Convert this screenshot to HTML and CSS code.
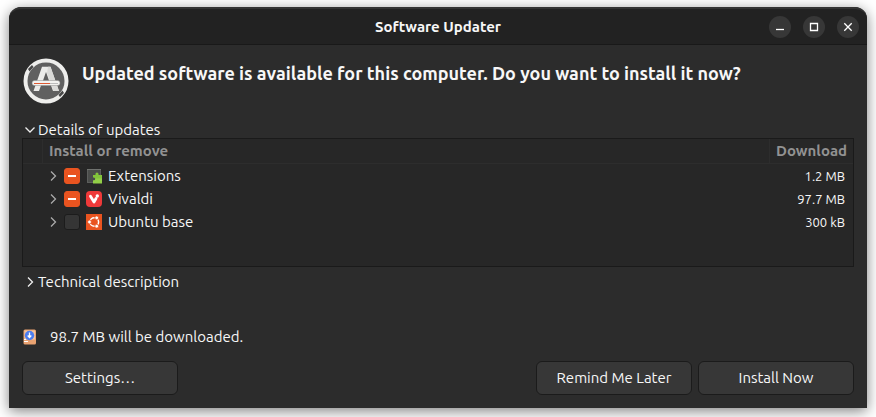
FILE: index.html
```html
<!DOCTYPE html>
<html lang="en">
<head>
<meta charset="utf-8">
<title>Software Updater</title>
<link rel="stylesheet" href="styles.css">
</head>
<body>
<main class="window">
  <header class="titlebar">
    <h1 class="title">Software Updater</h1>
    <div class="controls">
      <button class="control" type="button" aria-label="Minimize"><svg viewBox="0 0 22 22"><path d="M7 13.5h8"/></svg></button>
      <button class="control" type="button" aria-label="Maximize"><svg viewBox="0 0 22 22"><path d="M7.5 7.5h7v7h-7z"/></svg></button>
      <button class="control" type="button" aria-label="Close"><svg viewBox="0 0 22 22"><path d="M7.3 7.3l7.4 7.4M14.7 7.3l-7.4 7.4"/></svg></button>
    </div>
  </header>

  <div class="content">
    <section class="intro">
      <svg class="app-icon" viewBox="0 0 46 46" aria-hidden="true">
        <circle cx="23" cy="23" r="19" fill="#606060"/>
        <circle cx="23" cy="23" r="20.5" fill="none" stroke="#eeeeec" stroke-width="4"/>
        <path d="M5 11l4-4 1.500 2-4 4.500zM41 35l-4 4-1.500-2 4-4.500z" fill="#484848"/>
        <path d="M19 8.700h8.500L36 33h-6l-2.500-7h-9L16 33h-5.500zM23 14l-3.500 10h7z" fill="#ececea" fill-rule="evenodd"/>
        <path d="M25 8.700h2.500L36 33h-5.500l-6.500-18z" fill="#dadad8"/>
        <rect x="9" y="22.500" width="28" height="5" rx="2.500" fill="#f2f2f0" stroke="#8a8a8a" stroke-width=".5"/>
        <path d="M11 25.500h16" stroke="#dd5a34"/>
        <path d="M27 25.500h8" stroke="#bcbcbc"/>
      </svg>
      <h2 class="headline">Updated software is available for this computer. Do you want to install it now?</h2>
    </section>

    <button class="expander" type="button" aria-expanded="true">
      <svg class="arrow" viewBox="0 0 12 12"><path d="M1.500 3.500L6 8l4.500-4.500"/></svg>Details of updates
    </button>

    <div class="tree">
      <table class="updates">
        <thead>
          <tr><th class="gutter"></th><th class="name">Install or remove</th><th class="size">Download</th></tr>
        </thead>
        <tbody>
          <tr>
            <td></td>
            <td><div class="item">
              <button class="toggle" type="button" aria-label="Expand Extensions"><svg class="arrow" viewBox="0 0 12 12"><path d="M4 1.500L8.500 6 4 10.500"/></svg></button>
              <input class="check mixed" type="checkbox" id="extensions" checked>
              <svg class="item-icon" viewBox="0 0 16 16" aria-hidden="true">
                <path d="M1 1h14v14H1z" fill="#5c5e5c"/><path d="M2 2h12v12H2z" fill="#4a4c4a"/><path d="M1 1.500h14" stroke="#70726f"/>
                <path d="M7 7h2.500c-.8-3.500 3.800-3.500 3 0H16v8H7v-2.500c3 .8 3-3.800 0-3z" fill="#82c43a"/><path d="M7 12.500c2 .3 2.500-1 2.300-2H16v5H7z" fill="#93cf48"/>
              </svg>
              <label for="extensions">Extensions</label>
            </div></td>
            <td class="size">1.2 MB</td>
          </tr>
          <tr>
            <td></td>
            <td><div class="item">
              <button class="toggle" type="button" aria-label="Expand Vivaldi"><svg class="arrow" viewBox="0 0 12 12"><path d="M4 1.500L8.500 6 4 10.500"/></svg></button>
              <input class="check mixed" type="checkbox" id="vivaldi" checked>
              <svg class="item-icon" viewBox="0 0 16 16" aria-hidden="true">
                <rect width="16" height="16" rx="4" fill="#ef3939"/>
                <path d="M4.500 5.200L8 11l2-3.500" fill="none" stroke="#fff" stroke-width="2.800" stroke-linecap="round" stroke-linejoin="round"/><circle cx="11.300" cy="5" r="1.700" fill="#fff"/>
              </svg>
              <label for="vivaldi">Vivaldi</label>
            </div></td>
            <td class="size">97.7 MB</td>
          </tr>
          <tr>
            <td></td>
            <td><div class="item">
              <button class="toggle" type="button" aria-label="Expand Ubuntu base"><svg class="arrow" viewBox="0 0 12 12"><path d="M4 1.500L8.500 6 4 10.500"/></svg></button>
              <input class="check" type="checkbox" id="base">
              <svg class="item-icon" viewBox="0 0 16 16" aria-hidden="true">
                <path d="M0 0h16v16H0z" fill="#e95420"/>
                <circle cx="8.300" cy="8" r="4.300" fill="none" stroke="#fff" stroke-width="1.500"/>
                <g fill="#fff" stroke="#e95420" stroke-width=".8"><circle cx="3.500" cy="8" r="1.900"/><circle cx="10.700" cy="3.800" r="1.900"/><circle cx="10.700" cy="12.200" r="1.900"/></g>
              </svg>
              <label for="base">Ubuntu base</label>
            </div></td>
            <td class="size">300 kB</td>
          </tr>
        </tbody>
      </table>
    </div>

    <button class="expander technical" type="button" aria-expanded="false">
      <svg class="arrow" viewBox="0 0 12 12"><path d="M4 1.500L8.500 6 4 10.500"/></svg>Technical description
    </button>

    <p class="status">
      <svg class="disk" viewBox="0 0 14 16" aria-hidden="true">
        <rect x=".5" y=".5" width="12.500" height="15" rx="1.500" fill="#e9a271"/><path d="M1.500 1.500h10.500v9h-10.500z" fill="#f3c49e"/>
        <path d="M1 12.500h4M1 10.500h2" stroke="#fff"/>
        <circle cx="6.500" cy="6.500" r="4.700" fill="#4c7df0"/><path d="M6.500 3.500v5M4.700 6.500l1.800 2 1.800-2" fill="none" stroke="#fff" stroke-width="1.300"/>
      </svg>
      98.7 MB will be downloaded.
    </p>

    <footer class="actions">
      <button class="button" type="button">Settings…</button>
      <button class="button later" type="button">Remind Me Later</button>
      <button class="button" type="button">Install Now</button>
    </footer>
  </div>
</main>
</body>
</html>
```
FILE: styles.css
```css
* { box-sizing: border-box; }

body {
  margin: 0;
  min-height: 100vh;
  padding: 7px 9px 9px;
  display: flex;
  background: #fff;
  color: #f7f7f7;
  font: 15px/18px Ubuntu, "Noto Sans", sans-serif;
}

button {
  margin: 0;
  padding: 0;
  border: 0;
  background: none;
  color: inherit;
  font: inherit;
}

svg { display: block; flex: none; }

.window {
  flex: 1;
  display: flex;
  flex-direction: column;
  background: #2c2c2c;
  border-radius: 12px 12px 0 0;
  box-shadow: 0 3px 14px rgba(0, 0, 0, 0.5);
}

.titlebar {
  height: 38px;
  display: grid;
  grid-template-columns: 1fr auto 1fr;
  align-items: center;
  padding: 0 8px;
  background: #222;
  border-top: 2px solid #343434;
  border-bottom: 1px solid #191919;
  border-radius: 12px 12px 0 0;
}

.title {
  grid-column: 2;
  margin: 0;
  font-size: 15px;
  font-weight: 700;
}

.controls {
  justify-self: end;
  display: flex;
  gap: 12px;
}

.control {
  width: 22px;
  height: 22px;
  border-radius: 50%;
  background: #373737;
}

.control svg {
  fill: none;
  stroke: #fff;
  stroke-width: 1.3;
}

.content {
  flex: 1;
  display: flex;
  flex-direction: column;
  padding: 13px;
}

.intro {
  display: flex;
  gap: 13px;
  margin-bottom: 17px;
  padding-left: 1px;
}

.app-icon { width: 46px; height: 46px; }

.headline {
  margin: 3px 0 0;
  font-size: 18px;
  line-height: 24px;
  font-weight: 700;
}

.expander {
  align-self: flex-start;
  display: flex;
  align-items: center;
  gap: 2px;
  padding-left: 2px;
}

.arrow {
  width: 12px;
  height: 12px;
  fill: none;
  stroke: #eee;
  stroke-width: 1.3;
}

.tree {
  flex: 1;
  margin-top: -1px;
  border: 1px solid #1a1a1a;
  background: #272727;
}

.updates {
  width: 100%;
  table-layout: fixed;
  border-collapse: separate;
  border-spacing: 0;
}

.updates th {
  height: 25px;
  padding: 0 6px;
  border-bottom: 1px solid #2d2d2d;
  border-right: 1px solid #2d2d2d;
  color: #929292;
  text-align: left;
}

.updates th:last-child { border-right: 0; }

.updates .gutter { width: 20px; }
.updates th.size { width: 83px; }

.updates td {
  height: 23px;
  padding: 0 4px;
}

.updates td.size {
  padding-right: 8px;
  font-size: 13px;
  text-align: right;
}

.item {
  display: flex;
  align-items: center;
  gap: 6px;
}

.toggle { margin-right: -1px; }
.toggle .arrow { stroke: #aaa; }

.check {
  appearance: none;
  width: 16px;
  height: 16px;
  margin: 0;
  border: 1px solid #1c1c1c;
  border-radius: 3px;
  background: #353535;
}

.check.mixed {
  border-color: #e95420;
  background: linear-gradient(#fff, #fff) center / 8px 2px no-repeat #e95420;
}

.item-icon { width: 16px; height: 16px; }

.technical { margin: 6px 0 37px; }

.status {
  display: flex;
  align-items: center;
  gap: 13px;
  margin: 0 0 15px;
  padding-left: 1px;
}

.disk { width: 14px; height: 16px; }

.actions {
  display: flex;
  gap: 6px;
}

.button {
  width: 156px;
  height: 34px;
  border: 1px solid #1b1b1b;
  border-radius: 6px;
  background: #373737;
}

.later { margin-left: auto; }
```
